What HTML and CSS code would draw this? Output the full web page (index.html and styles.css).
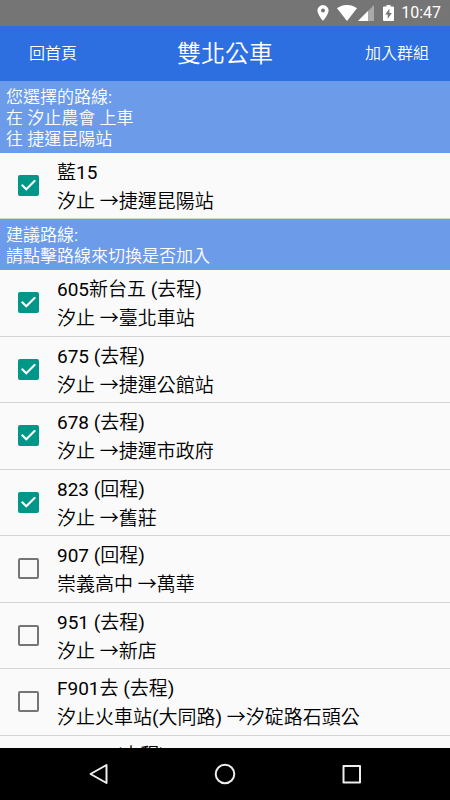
FILE: index.html
```html
<!DOCTYPE html>
<html lang="zh-TW">
<head>
<meta charset="utf-8">
<meta name="viewport" content="width=device-width, initial-scale=1">
<title>雙北公車</title>
<link rel="stylesheet" href="styles.css">
</head>
<body>
<div class="statusbar">
  <div class="status-icons">
    <svg width="12" height="16" viewBox="0 0 12 16"><path fill="#fff" fill-rule="evenodd" d="M6 0a5.6 5.6 0 0 0-5.6 5.6C.4 9.700 6 16 6 16s5.600-6.300 5.600-10.400A5.600 5.600 0 0 0 6 0zm0 3.600a2 2 0 1 1 0 4 2 2 0 0 1 0-4z"/></svg>
    <svg width="38" height="16" viewBox="0 0 38 16"><path fill="#fff" d="M0 3.200C5.500-1.100 14.500-1.100 20 3.200L10 16z"/><path fill="#a9a9a9" d="M37 0v16H21z"/><path fill="#fff" d="M31 6v10H21z"/></svg>
    <svg width="11" height="16" viewBox="0 0 11 16"><path fill="#fff" d="M3.500 0h4v1.600H10q1 0 1 1V15q0 1-1 1H1q-1 0-1-1V2.600q0-1 1-1h2.500z"/><path fill="#757575" d="M6.400 3.800 2.200 9.500h2.500v4.200L8.900 8H6.400z"/></svg>
  </div>
  <span class="clock">10:47</span>
</div>
<header class="appbar">
  <button class="appbar-button" type="button">回首頁</button>
  <h1 class="title">雙北公車</h1>
  <button class="appbar-button end" type="button">加入群組</button>
</header>
<main class="content">
  <h2 class="section">您選擇的路線:<br>在 汐止農會 上車<br>往 捷運昆陽站</h2>
  <ul class="routes">
    <li><label class="route"><input class="check" type="checkbox" checked><span class="name">藍15<br>汐止 →捷運昆陽站</span></label></li>
  </ul>
  <h2 class="section">建議路線:<br>請點擊路線來切換是否加入</h2>
  <ul class="routes">
    <li><label class="route"><input class="check" type="checkbox" checked><span class="name">605新台五 (去程)<br>汐止 →臺北車站</span></label></li>
    <li><label class="route"><input class="check" type="checkbox" checked><span class="name">675 (去程)<br>汐止 →捷運公館站</span></label></li>
    <li><label class="route"><input class="check" type="checkbox" checked><span class="name">678 (去程)<br>汐止 →捷運市政府</span></label></li>
    <li><label class="route"><input class="check" type="checkbox" checked><span class="name">823 (回程)<br>汐止 →舊莊</span></label></li>
    <li><label class="route"><input class="check" type="checkbox"><span class="name">907 (回程)<br>崇義高中 →萬華</span></label></li>
    <li><label class="route"><input class="check" type="checkbox"><span class="name">951 (去程)<br>汐止 →新店</span></label></li>
    <li><label class="route"><input class="check" type="checkbox"><span class="name">F901去 (去程)<br>汐止火車站(大同路) →汐碇路石頭公</span></label></li>
    <li><label class="route"><input class="check" type="checkbox"><span class="name">F9021 (去程)</span></label></li>
  </ul>
</main>
<nav class="navbar">
  <button class="nav-button" type="button" aria-label="返回"><svg width="22" height="22" viewBox="0 0 22 22"><path d="M19.500 2v18L3.500 11z"/></svg></button>
  <button class="nav-button" type="button" aria-label="主畫面"><svg width="22" height="22" viewBox="0 0 22 22"><circle cx="11" cy="11" r="9.300"/></svg></button>
  <button class="nav-button" type="button" aria-label="最近使用"><svg width="22" height="22" viewBox="0 0 22 22"><path d="M2.500 3h16.500v16.500H2.500z"/></svg></button>
</nav>
</body>
</html>
```

FILE: styles.css
```css
* {
  box-sizing: border-box;
}

body {
  margin: 0;
  height: 100vh;
  display: flex;
  flex-direction: column;
  overflow: hidden;
  background: #fafafa;
  color: #000;
  font-family: Roboto, "Noto Sans CJK TC DemiLight", "Noto Sans CJK TC", sans-serif;
  font-weight: 400;
}

button {
  border: 0;
  background: none;
  color: inherit;
  font-family: inherit;
  font-weight: inherit;
}

.statusbar {
  flex: none;
  height: 26px;
  padding: 0 9px;
  display: flex;
  align-items: center;
  justify-content: flex-end;
  gap: 7px;
  background: #757575;
  color: #fff;
}

.status-icons {
  display: flex;
  gap: 8px;
}

.clock {
  font-size: 16px;
  line-height: 28px;
}

.appbar {
  flex: none;
  height: 55px;
  padding: 0 21px;
  display: grid;
  grid-template-columns: 1fr auto 1fr;
  align-items: center;
  background: #2d6fe1;
  color: #fff;
}

.appbar-button {
  justify-self: start;
  padding: 0 8px;
  font-size: 16px;
  line-height: 24px;
}

.end {
  justify-self: end;
  padding: 0;
}

.title {
  margin: 0;
  font-size: 24px;
  font-weight: inherit;
  line-height: 32px;
}

.content {
  flex: 1;
  min-height: 0;
  overflow: hidden;
}

.section {
  margin: 0;
  padding: 6px 6px 3px;
  background: #6c9be9;
  color: #fff;
  font-size: 17px;
  font-weight: inherit;
  line-height: 21px;
}

.routes {
  margin: 0;
  padding: 0;
  list-style: none;
}

.route {
  display: flex;
  align-items: center;
  gap: 18px;
  padding: 5px 18px 2px;
  border-bottom: 1px solid #d4d4d4;
  font-size: 19px;
  line-height: 29px;
}

.routes li:nth-child(odd):not(:only-child) .route {
  padding-bottom: 3px;
}

.name {
  min-height: 58px;
}

.check {
  appearance: none;
  flex: none;
  width: 21px;
  height: 21px;
  margin: 0 0 3px;
  border: 2px solid #757575;
  border-radius: 2px;
}

.check:checked {
  display: grid;
  place-items: center;
  border-color: #009688;
  background: #009688;
}

.check:checked::before {
  content: "";
  width: 15px;
  height: 12px;
  background: #fff;
  clip-path: polygon(0 50%, 10% 38%, 35% 68%, 90% 0, 100% 12%, 35% 94%);
}

.navbar {
  flex: none;
  height: 52px;
  padding: 0 35px;
  display: grid;
  grid-template-columns: repeat(3, 1fr);
  align-items: center;
  background: #000;
}

.nav-button {
  padding: 0;
  display: grid;
  place-items: center;
}

.nav-button svg {
  fill: none;
  stroke: #eee;
  stroke-width: 2;
  stroke-linejoin: round;
}
```
